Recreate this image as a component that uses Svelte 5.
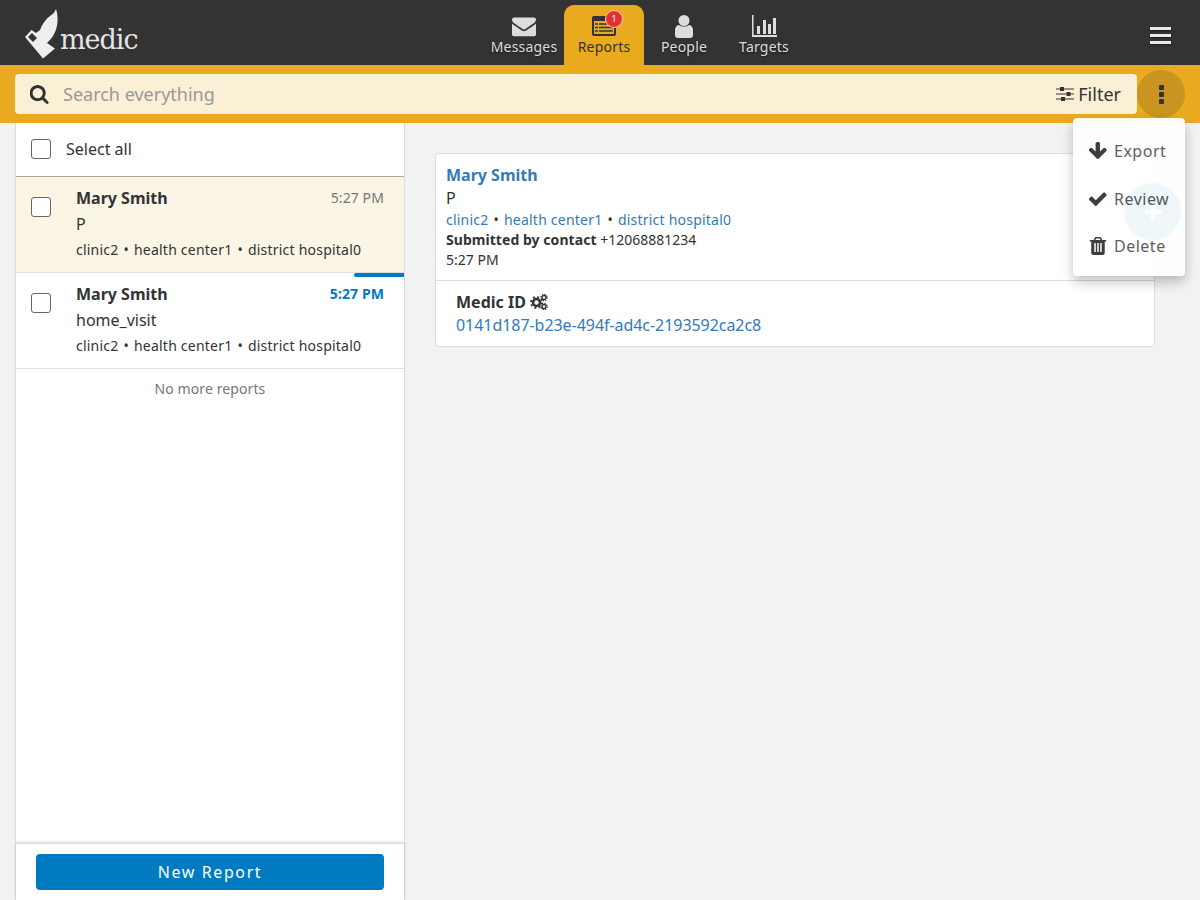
<script>
	const tabs = [
		{ id: 'messages', label: 'Messages' },
		{ id: 'reports', label: 'Reports', active: true, badge: 1 },
		{ id: 'people', label: 'People' },
		{ id: 'targets', label: 'Targets' }
	];

	const reports = [
		{ name: 'Mary Smith', form: 'P', time: '5:27 PM', selected: true },
		{ name: 'Mary Smith', form: 'home_visit', time: '5:27 PM', unread: true }
	];

	const lineage = ['clinic2', 'health center1', 'district hospital0'];
</script>

<div class="page">
	<header class="topbar">
		<a class="logo" href="#top">
			<svg width="40" height="54" viewBox="0 0 40 54" aria-hidden="true">
				<path
					fill="#eee"
					fill-rule="evenodd"
					d="M5 32 11.500 25 16 28 20 25C22 19 26 14 30 11 33 9 35 7 36 4 38 10 38.500 18 35.500 26 33 32 30 35 27 38L35 43.500 23 53.500ZM8 32 13 37 17 33 12 28Z"
				/>
			</svg>
			<span>medic</span>
		</a>

		<nav class="tabs">
			{#each tabs as tab}
				<a class="tab" class:active={tab.active} href="#top">
					<span class="tab-icon">
						{#if tab.id === 'messages'}
							<svg width="24" height="24" viewBox="0 128 1792 1536" aria-hidden="true">
								<path
									fill="currentColor"
									d="M1792 710v794q0 66-47 113t-113 47h-1472q-66 0-113-47t-47-113v-794q44 49 101 87 362 246 497 345 57 42 92.500 65.500t94.500 48 110 24.500h2q51 0 110-24.500t94.500-48 92.500-65.500q170-123 498-345 57-39 100-87zm0-294q0 79-49 151t-122 123q-376 261-468 325-10 7-42.500 30.500t-54 38-52 32.500-57.500 27-50 9h-2q-23 0-50-9t-57.500-27-52-32.500-54-38-42.500-30.500q-91-64-262-182.500t-205-142.500q-62-42-117-115.500t-55-136.500q0-78 41.500-130t118.500-52h1472q65 0 112.500 47t47.500 113z"
								/>
							</svg>
						{:else if tab.id === 'reports'}
							<svg width="24" height="20" viewBox="0 0 24 20" aria-hidden="true">
								<rect width="24" height="20" rx="2" fill="#333" />
								<rect x="2" y="5" width="20" height="13" fill="#e9aa1f" />
								<path d="M3 8h3M7 8h14M3 11.500h3M7 11.500h14M3 15h3M7 15h14" stroke="#333" stroke-width="1.500" />
							</svg>
						{:else if tab.id === 'people'}
							<svg width="18" height="23" viewBox="0 0 18 23" aria-hidden="true">
								<circle cx="9" cy="5.500" r="5.500" fill="currentColor" />
								<path fill="currentColor" d="M0 15c0-3 2-5 4-5 1.500 1 3 1.500 5 1.500s3.500-.5 5-1.500c2 0 4 2 4 5v5c0 2-1 3-3 3H3c-2 0-3-1-3-3z" />
							</svg>
						{:else}
							<svg width="25" height="22" viewBox="0 0 25 22" aria-hidden="true">
								<path fill="currentColor" d="M0 0h1.500v20H25v2H0zM5 11h3v8H5zM11 5h3v14h-3zM16 9h3v10h-3zM21 3h3v16h-3z" />
							</svg>
						{/if}
						{#if tab.badge}
							<span class="badge">{tab.badge}</span>
						{/if}
					</span>
					<span class="tab-label">{tab.label}</span>
				</a>
			{/each}
		</nav>

		<button class="hamburger" aria-label="Menu">
			<span></span><span></span><span></span>
		</button>
	</header>

	<div class="searchbar">
		<div class="search">
			<svg width="19" height="19" viewBox="128 128 1600 1664" aria-hidden="true">
				<path
					fill="#333"
					d="M1216 832q0-185-131.500-316.500t-316.500-131.500-316.500 131.500-131.500 316.500 131.500 316.500 316.500 131.500 316.500-131.500 131.500-316.500zm512 832q0 52-38 90t-90 38q-54 0-90-38l-343-342q-179 124-399 124-143 0-273.500-55.500t-225-150-150-225-55.500-273.500 55.500-273.500 150-225 225-150 273.500-55.500 273.500 55.500 225 150 150 225 55.500 273.500q0 220-124 399l343 343q37 37 37 90z"
				/>
			</svg>
			<span class="placeholder">Search everything</span>
			<span class="filter">
				<svg width="18" height="16" viewBox="0 0 18 16" aria-hidden="true">
					<path d="M0 3h18M0 8h18M0 13h18" stroke="#333" stroke-width="1.200" />
					<path d="M4 1h4v4H4zM10.500 6h4v4h-4zM5 11h4v4H5z" fill="#333" />
				</svg>
				Filter
			</span>
		</div>
		<button class="kebab" aria-label="Actions">
			<span></span><span></span><span></span>
		</button>
	</div>

	<main class="body">
		<aside class="sidebar">
			<div class="select-all">
				<span class="checkbox"></span>
				<span>Select all</span>
			</div>

			<ul class="report-list">
				{#each reports as report}
					<li class="report" class:selected={report.selected} class:unread={report.unread}>
						<span class="checkbox"></span>
						<div class="report-text">
							<div class="report-head">
								<strong>{report.name}</strong>
								<span class="time">{report.time}</span>
							</div>
							<div class="form">{report.form}</div>
							<div class="lineage">
								{#each lineage as place, i}
									{#if i > 0}<span class="dot">•</span>{/if}{place}
								{/each}
							</div>
						</div>
					</li>
				{/each}
			</ul>

			<p class="no-more">No more reports</p>

			<div class="sidebar-footer">
				<button class="new-report">New Report</button>
			</div>
		</aside>

		<section class="content">
			<article class="card">
				<div class="card-head">
					<a class="card-name" href="#top">Mary Smith</a>
					<div class="card-form">P</div>
					<div class="card-lineage">
						{#each lineage as place, i}
							{#if i > 0}<span class="dot">•</span>{/if}<a href="#top">{place}</a>
						{/each}
					</div>
					<div class="card-meta"><strong>Submitted by contact</strong> +12068881234</div>
					<div class="card-meta">5:27 PM</div>
				</div>
				<div class="card-field">
					<div class="field-label">
						Medic ID
						<svg width="18" height="16" viewBox="0 0 18 16" aria-hidden="true">
							<circle cx="6.500" cy="8.500" r="3.500" fill="none" stroke="#333" stroke-width="2.500" />
							<circle cx="6.500" cy="8.500" r="5.500" fill="none" stroke="#333" stroke-width="1.800" stroke-dasharray="2 2.320" />
							<circle cx="14" cy="3.500" r="2" fill="none" stroke="#333" stroke-width="1.400" />
							<circle cx="14" cy="3.500" r="3.200" fill="none" stroke="#333" stroke-width="1.200" stroke-dasharray="1.300 1.210" />
							<circle cx="14" cy="12.500" r="2" fill="none" stroke="#333" stroke-width="1.400" />
							<circle cx="14" cy="12.500" r="3.200" fill="none" stroke="#333" stroke-width="1.200" stroke-dasharray="1.300 1.210" />
						</svg>
					</div>
					<a class="field-value" href="#top">0141d187-b23e-494f-ad4c-2193592ca2c8</a>
				</div>
			</article>
		</section>
	</main>

	<div class="fab" aria-hidden="true"><span></span></div>

	<div class="menu">
		<div class="menu-item">
			<svg width="18" height="18" viewBox="128 128 1568 1568" aria-hidden="true">
				<path
					fill="#333"
					d="M1675 832q0 53-37 90l-651 652q-39 37-91 37-53 0-90-37l-651-652q-38-36-38-90 0-53 38-91l74-75q39-37 91-37 53 0 90 37l294 294v-704q0-52 38-90t90-38h128q52 0 90 38t38 90v704l294-294q37-37 90-37 52 0 91 37l75 75q37 39 37 91z"
				/>
			</svg>
			Export
		</div>
		<div class="menu-item">
			<svg width="18" height="18" viewBox="128 128 1568 1568" aria-hidden="true">
				<path
					fill="#333"
					d="M1671 566q0 40-28 68l-724 724-136 136q-28 28-68 28t-68-28l-136-136-362-362q-28-28-28-68t28-68l136-136q28-28 68-28t68 28l294 295 656-657q28-28 68-28t68 28l136 136q28 28 28 68z"
				/>
			</svg>
			Review
		</div>
		<div class="menu-item">
			<svg width="18" height="18" viewBox="128 128 1536 1536" aria-hidden="true">
				<path
					fill="#333"
					d="M704 1376v-704q0-14-9-23t-23-9h-64q-14 0-23 9t-9 23v704q0 14 9 23t23 9h64q14 0 23-9t9-23zm256 0v-704q0-14-9-23t-23-9h-64q-14 0-23 9t-9 23v704q0 14 9 23t23 9h64q14 0 23-9t9-23zm256 0v-704q0-14-9-23t-23-9h-64q-14 0-23 9t-9 23v704q0 14 9 23t23 9h64q14 0 23-9t9-23zm-544-992h448l-48-117q-7-9-17-11h-317q-10 2-17 11zm928 32v64q0 14-9 23t-23 9h-96v948q0 83-47 143.500t-113 60.500h-832q-66 0-113-58.500t-47-141.500v-952h-96q-14 0-23-9t-9-23v-64q0-14 9-23t23-9h309l70-167q15-37 54-63t79-26h320q40 0 79 26t54 63l70 167h309q14 0 23 9t9 23z"
				/>
			</svg>
			Delete
		</div>
	</div>
</div>

<style>
	:global(*, *::before, *::after) {
		box-sizing: border-box;
	}

	:global(body) {
		font-family: 'Noto Sans', sans-serif;
		color: #333;
		background: #f2f2f2;
	}

	a {
		text-decoration: none;
	}

	ul {
		list-style: none;
		margin: 0;
		padding: 0;
	}

	button {
		font-family: inherit;
		border: none;
		padding: 0;
	}

	.page {
		position: relative;
		height: 900px;
		display: flex;
		flex-direction: column;
		overflow: hidden;
	}

	.topbar {
		height: 65px;
		flex-shrink: 0;
		display: flex;
		background: #333;
		padding: 5px 29px 0 20px;
	}

	.logo {
		width: 464px;
		height: 60px;
		display: flex;
		align-items: flex-start;
		color: #e4e4e4;
		font-family: 'DejaVu Serif', serif;
		font-size: 27px;
		line-height: 60px;
	}

	.logo span {
		margin-top: 5px;
		letter-spacing: -1px;
		line-height: 60px;
	}

	.tabs {
		display: flex;
	}

	.tab {
		width: 80px;
		height: 60px;
		border-radius: 10px 10px 0 0;
		display: flex;
		flex-direction: column;
		align-items: center;
		color: #ddd;
		text-shadow: 0 1px 2px rgba(0, 0, 0, 0.5);
	}

	.tab.active {
		background: #e9aa1f;
		color: #333;
		text-shadow: none;
	}

	.tab-icon {
		position: relative;
		height: 24px;
		margin-top: 9px;
		display: flex;
		align-items: center;
		justify-content: center;
	}

	.tab-label {
		font-size: 14px;
		line-height: 20px;
		margin-top: -1px;
		letter-spacing: 0.2px;
	}

	.badge {
		position: absolute;
		top: -4px;
		right: -7px;
		width: 18px;
		height: 18px;
		border-radius: 50%;
		background: #e33030;
		color: #fff;
		border: 1px solid #f6c8b0;
		font-size: 9px;
		line-height: 16px;
		text-align: center;
	}

	.hamburger {
		margin-left: auto;
		margin-top: 22px;
		width: 21px;
		height: 17px;
		background: none;
		display: flex;
		flex-direction: column;
		justify-content: space-between;
	}

	.hamburger span {
		height: 3px;
		background: #e8e8e8;
		box-shadow: 0 1px 2px rgba(0, 0, 0, 0.5);
	}

	.searchbar {
		height: 58px;
		flex-shrink: 0;
		display: flex;
		background: #e9aa1f;
		padding: 5px 15px 0;
	}

	.search {
		width: 1122px;
		height: 40px;
		margin-top: 4px;
		display: flex;
		align-items: center;
		background: #faf0d6;
		border-radius: 4px;
		padding: 0 16px 0 15px;
		font-size: 18px;
	}

	.placeholder {
		margin-left: 14px;
		color: #999;
	}

	.filter {
		margin-left: auto;
		display: flex;
		align-items: center;
		gap: 4px;
		color: #333;
	}

	.kebab {
		width: 48px;
		height: 48px;
		border-radius: 50%;
		background: #c9941f;
		display: flex;
		flex-direction: column;
		align-items: center;
		justify-content: center;
		gap: 2px;
	}

	.kebab span {
		width: 5px;
		height: 5px;
		border-radius: 1px;
		background: #333;
	}

	.body {
		flex: 1;
		min-height: 0;
		display: flex;
	}

	.sidebar {
		width: 390px;
		margin-left: 15px;
		display: flex;
		flex-direction: column;
		background: #fff;
		border-left: 1px solid #ddd;
		border-right: 1px solid #ddd;
	}

	.select-all {
		height: 54px;
		flex-shrink: 0;
		display: flex;
		align-items: center;
		gap: 15px;
		padding: 0 15px 1px;
		border-bottom: 1px solid #aaa69f;
		font-size: 16px;
	}

	.checkbox {
		width: 20px;
		height: 20px;
		flex-shrink: 0;
		background: #fff;
		border: 1px solid #666;
		border-radius: 3px;
	}

	.report {
		height: 96px;
		position: relative;
		display: flex;
		gap: 25px;
		padding: 10px 20px 0 15px;
		border-bottom: 1px solid #e0e0e0;
	}

	.report .checkbox {
		margin-top: 10px;
	}

	.report.selected {
		background: #fbf5e6;
	}

	.report.unread::before {
		content: '';
		position: absolute;
		top: 0;
		right: 0;
		width: 50px;
		height: 4px;
		background: #007ac0;
		border-radius: 2px 0 0 2px;
	}

	.report-text {
		flex: 1;
		min-width: 0;
	}

	.report-head {
		display: flex;
		justify-content: space-between;
		align-items: center;
		font-size: 16px;
		line-height: 22px;
	}

	.time {
		font-size: 14px;
		color: #777;
		letter-spacing: 0.1px;
	}

	.unread .time {
		color: #007ac0;
		font-weight: 700;
	}

	.form {
		font-size: 16px;
		line-height: 22px;
		margin-top: 4px;
	}

	.lineage,
	.card-lineage {
		letter-spacing: 0.22px;
	}

	.lineage {
		font-size: 14px;
		line-height: 20px;
		margin-top: 5px;
		white-space: nowrap;
	}

	.dot {
		margin: 0 5px;
	}

	.no-more {
		margin: 0;
		flex: 1;
		padding-top: 10px;
		text-align: center;
		font-size: 14px;
		line-height: 20px;
		letter-spacing: 0.1px;
		color: #777;
	}

	.sidebar-footer {
		height: 57px;
		flex-shrink: 0;
		padding: 10px 20px 0;
		border-top: 1px solid #ddd;
		box-shadow: 0 -1px 3px rgba(0, 0, 0, 0.15);
	}

	.new-report {
		width: 100%;
		height: 36px;
		background: #007ac0;
		color: #fff;
		border-radius: 4px;
		font-size: 16px;
		letter-spacing: 1.6px;
	}

	.content {
		flex: 1;
		padding: 30px 45px 0 30px;
	}

	.card {
		background: #fff;
		border: 1px solid #ddd;
		border-radius: 4px;
	}

	.card-head {
		padding: 10px;
		height: 127px;
		border-bottom: 1px solid #ddd;
		font-size: 14px;
		line-height: 20px;
	}

	.card-name {
		display: block;
		font-size: 16px;
		line-height: 22px;
		font-weight: 700;
		color: #337ab7;
	}

	.card-form {
		font-size: 16px;
		line-height: 24px;
	}

	.card-lineage a,
	.field-value {
		color: #337ab7;
	}

	.card-meta strong {
		letter-spacing: 0.05px;
	}

	.card-field {
		padding: 10px 20px 9px;
	}

	.field-label {
		display: flex;
		align-items: center;
		gap: 4px;
		font-size: 16px;
		line-height: 22px;
		font-weight: 700;
	}

	.field-value {
		display: block;
		font-size: 16px;
		line-height: 24px;
		letter-spacing: -0.05px;
	}

	.fab {
		position: absolute;
		left: 1124px;
		top: 183px;
		width: 57px;
		height: 57px;
		border-radius: 50%;
		background: #007ac0;
		display: flex;
		align-items: center;
		justify-content: center;
	}

	.fab span {
		width: 16px;
		height: 16px;
		background:
			linear-gradient(#fff, #fff) center / 16px 4px no-repeat,
			linear-gradient(#fff, #fff) center / 4px 16px no-repeat;
	}

	.menu {
		position: absolute;
		left: 1073px;
		top: 118px;
		width: 112px;
		height: 158px;
		padding-top: 9px;
		display: flex;
		flex-direction: column;
		background: #fff;
		border-radius: 4px;
		opacity: 0.94;
		box-shadow: 0 6px 12px rgba(0, 0, 0, 0.25);
	}

	.menu-item {
		height: 47.500px;
		flex-shrink: 0;
		display: flex;
		align-items: center;
		gap: 7px;
		padding-left: 16px;
		padding-top: 1px;
		font-size: 16px;
		letter-spacing: 0.5px;
		color: #555;
	}
</style>
